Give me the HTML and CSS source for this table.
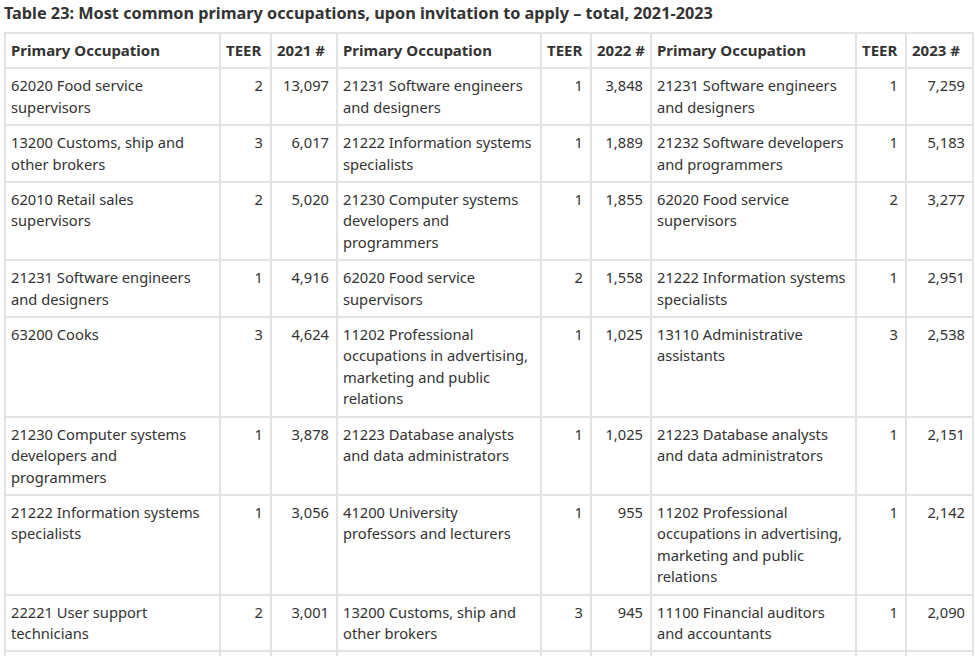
FILE: index.html
```html
<!DOCTYPE html>
<html lang="en">
<head>
<meta charset="utf-8">
<title>Table 23</title>
<link rel="stylesheet" href="styles.css">
</head>
<body>
<h2 class="caption">Table 23: Most common primary occupations, upon invitation to apply – total, 2021-2023</h2>
<table class="occ">
  <colgroup>
    <col class="c1"><col class="c2"><col class="c3">
    <col class="c4"><col class="c5"><col class="c6">
    <col class="c7"><col class="c8"><col class="c9">
  </colgroup>
  <thead>
    <tr>
      <th>Primary Occupation</th><th>TEER</th><th>2021 #</th>
      <th>Primary Occupation</th><th>TEER</th><th>2022 #</th>
      <th>Primary Occupation</th><th>TEER</th><th>2023 #</th>
    </tr>
  </thead>
  <tbody>
    <tr>
      <td>62020 Food service supervisors</td><td class="r">2</td><td class="r">13,097</td>
      <td>21231 Software engineers and designers</td><td class="r">1</td><td class="r">3,848</td>
      <td>21231 Software engineers and designers</td><td class="r">1</td><td class="r">7,259</td>
    </tr>
    <tr>
      <td>13200 Customs, ship and other brokers</td><td class="r">3</td><td class="r">6,017</td>
      <td>21222 Information systems specialists</td><td class="r">1</td><td class="r">1,889</td>
      <td>21232 Software developers and programmers</td><td class="r">1</td><td class="r">5,183</td>
    </tr>
    <tr>
      <td>62010 Retail sales supervisors</td><td class="r">2</td><td class="r">5,020</td>
      <td>21230 Computer systems developers and programmers</td><td class="r">1</td><td class="r">1,855</td>
      <td>62020 Food service supervisors</td><td class="r">2</td><td class="r">3,277</td>
    </tr>
    <tr>
      <td>21231 Software engineers and designers</td><td class="r">1</td><td class="r">4,916</td>
      <td>62020 Food service supervisors</td><td class="r">2</td><td class="r">1,558</td>
      <td>21222 Information systems specialists</td><td class="r">1</td><td class="r">2,951</td>
    </tr>
    <tr>
      <td>63200 Cooks</td><td class="r">3</td><td class="r">4,624</td>
      <td>11202 Professional occupations in advertising, marketing and public relations</td><td class="r">1</td><td class="r">1,025</td>
      <td>13110 Administrative assistants</td><td class="r">3</td><td class="r">2,538</td>
    </tr>
    <tr>
      <td>21230 Computer systems developers and programmers</td><td class="r">1</td><td class="r">3,878</td>
      <td>21223 Database analysts and data administrators</td><td class="r">1</td><td class="r">1,025</td>
      <td>21223 Database analysts and data administrators</td><td class="r">1</td><td class="r">2,151</td>
    </tr>
    <tr>
      <td>21222 Information systems specialists</td><td class="r">1</td><td class="r">3,056</td>
      <td>41200 University professors and lecturers</td><td class="r">1</td><td class="r">955</td>
      <td>11202 Professional occupations in advertising, marketing and public relations</td><td class="r">1</td><td class="r">2,142</td>
    </tr>
    <tr>
      <td>22221 User support technicians</td><td class="r">2</td><td class="r">3,001</td>
      <td>13200 Customs, ship and other brokers</td><td class="r">3</td><td class="r">945</td>
      <td>11100 Financial auditors and accountants</td><td class="r">1</td><td class="r">2,090</td>
    </tr>
    <tr class="tail">
      <td></td><td></td><td></td>
      <td></td><td></td><td></td>
      <td></td><td></td><td></td>
    </tr>
  </tbody>
</table>
</body>
</html>
```
FILE: styles.css
```css
html, body {
  margin: 0;
  padding: 0;
  background: #fff;
}
body {
  padding: 0 3px 0 4px;
  font-family: "Noto Sans", "Open Sans", sans-serif;
  color: #333;
  overflow: hidden;
}
.caption {
  margin: 0;
  padding-top: 3px;
  font-size: 16.25px;
  line-height: 21px;
  font-weight: 700;
  color: #333;
  height: 29px;
}
.occ {
  border-collapse: collapse;
  table-layout: fixed;
  width: 968px;
  font-size: 14.7px;
  line-height: 21.4px;
}
.c1 { width: 215px; }
.c2 { width: 51px; }
.c3 { width: 66px; }
.c4 { width: 204px; }
.c5 { width: 50px; }
.c6 { width: 60px; }
.c7 { width: 205px; }
.c8 { width: 50px; }
.c9 { width: 67px; }
.occ th, .occ td {
  border: 2px solid #e3e3e3;
  padding: 6px 7px 6px 5px;
  vertical-align: top;
  text-align: left;
}
.occ th {
  font-weight: 700;
  font-size: 15px;
  white-space: nowrap;
  overflow: visible;
}
.occ td.r {
  text-align: right;
}
.occ .tail td {
  height: 40px;
}
```
